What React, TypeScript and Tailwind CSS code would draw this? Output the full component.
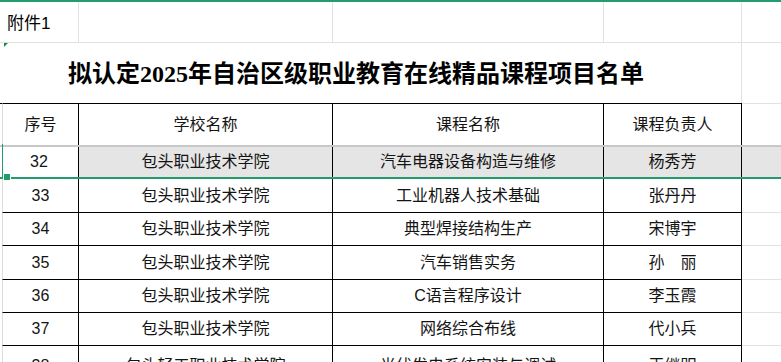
import React from "react";

type RowData = { no: string; school: string; course: string; person: string; h: string };

const rows: RowData[] = [
  { no: "33", school: "包头职业技术学院", course: "工业机器人技术基础", person: "张丹丹", h: "h-[34px]" },
  { no: "34", school: "包头职业技术学院", course: "典型焊接结构生产", person: "宋博宇", h: "h-[33px]" },
  { no: "35", school: "包头职业技术学院", course: "汽车销售实务", person: "孙\u3000丽", h: "h-[34px]" },
  { no: "36", school: "包头职业技术学院", course: "C语言程序设计", person: "李玉霞", h: "h-[33px]" },
  { no: "37", school: "包头职业技术学院", course: "网络综合布线", person: "代小兵", h: "h-[33px]" },
  { no: "38", school: "包头轻工职业技术学院", course: "光伏发电系统安装与调试", person: "王继明", h: "h-[40px]" },
];

function BodyRow({ r }: { r: RowData }) {
  return (
    <div className={`flex ${r.h}`}>
      <div className="w-[79px] ml-0 flex">
        <div className="w-[2px]" />
        <div className="flex-1 flex items-center justify-center border-l border-l-[#dcdcdc] border-r border-r-black border-b border-b-black">
          {r.no}
        </div>
      </div>
      <div className="w-[254px] flex items-center justify-center border-r border-r-black border-b border-b-black">
        {r.school}
      </div>
      <div className="w-[271px] flex items-center justify-center border-r border-r-black border-b border-b-black">
        {r.course}
      </div>
      <div className="w-[138px] flex items-center justify-center border-r border-r-black border-b border-b-black">
        {r.person}
      </div>
      <div className="flex-1 border-b border-b-[#e1e1e1]" />
    </div>
  );
}

export default function App() {
  return (
    <div className="relative w-[781px] h-[362px] overflow-hidden bg-white text-[16px] text-[#141414] font-['Liberation_Sans','Noto_Sans_CJK_SC',sans-serif]">
      <div className="h-[2px] bg-[#229b6d]" />
      {/* Row 1 */}
      <div className="flex h-[41px] border-b border-[#e1e1e1]">
        <div className="w-[79px] flex items-center pl-[7px] pt-[3px] border-r border-[#e1e1e1] text-[17px] text-black">
          附件1
        </div>
        <div className="w-[254px] border-r border-[#e1e1e1]" />
        <div className="w-[271px] border-r border-[#e1e1e1]" />
        <div className="w-[138px] border-r border-[#e1e1e1]" />
        <div className="flex-1" />
      </div>
      {/* Title row */}
      <div className="flex h-[60px]">
        <div className="relative w-[742px] flex items-center pl-[68px] pt-[1px] border-r border-[#e1e1e1] font-['Liberation_Serif','Noto_Sans_CJK_SC',serif] font-bold text-[24px] text-black">
          <span className="absolute left-[4px] top-[0px] w-0 h-0 border-t-[4px] border-t-[#1a8f3a] border-r-[4px] border-r-transparent" />
          拟认定2025年自治区级职业教育在线精品课程项目名单
        </div>
        <div className="flex-1" />
      </div>
      {/* Header row */}
      <div className="flex h-[42px]">
        <div className="w-[79px] flex">
          <div className="w-[2px] border-t border-t-black" />
          <div className="flex-1 flex items-center justify-center border-t border-t-black border-l border-l-[#dcdcdc] border-r border-r-black">
            序号
          </div>
        </div>
        <div className="w-[254px] flex items-center justify-center border-t border-t-black border-r border-r-black">
          学校名称
        </div>
        <div className="w-[271px] flex items-center justify-center border-t border-t-black border-r border-r-black">
          课程名称
        </div>
        <div className="w-[138px] flex items-center justify-center border-t border-t-black border-r border-r-black">
          课程负责人
        </div>
        <div className="flex-1 border-t border-t-[#e1e1e1]" />
      </div>
      {/* Selected row 32 */}
      <div className="relative flex h-[34px] border-t-2 border-t-[#c8c8c8] border-b-2 border-b-[#229b6d]">
        <div className="w-[79px] flex items-center justify-center bg-white border-r border-r-black">32</div>
        <div className="w-[254px] flex items-center justify-center bg-[#e5e5e5] border-r border-r-black">
          包头职业技术学院
        </div>
        <div className="w-[271px] flex items-center justify-center bg-[#e5e5e5] border-r border-r-black">
          汽车电器设备构造与维修
        </div>
        <div className="w-[138px] flex items-center justify-center bg-[#e5e5e5] border-r border-r-black">
          杨秀芳
        </div>
        <div className="flex-1 bg-[#e5e5e5]" />
        <span className="absolute left-[2px] top-[-3px] w-[1px] h-[35px] bg-[#229b6d]" />
        <span className="absolute left-[3px] bottom-[-4px] w-[8px] h-[8px] bg-white" />
        <span className="absolute left-[4px] bottom-[-3px] w-[6px] h-[6px] bg-[#229b6d]" />
      </div>
      {rows.map((r) => (
        <BodyRow key={r.no} r={r} />
      ))}
    </div>
  );
}
